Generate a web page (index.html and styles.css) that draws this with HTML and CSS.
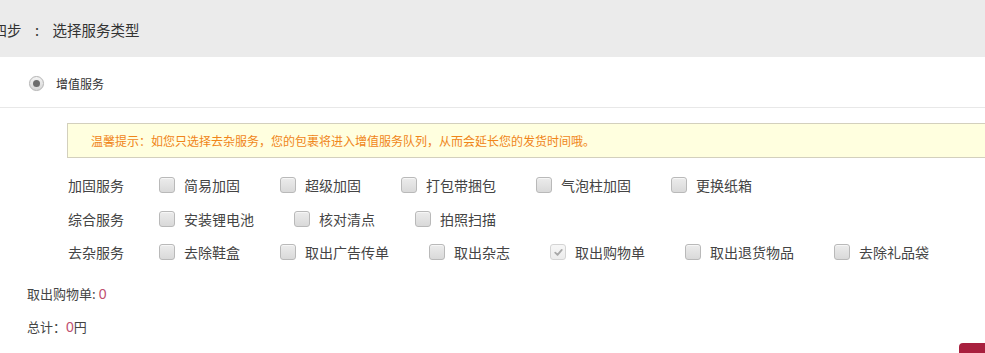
FILE: index.html
```html
<!DOCTYPE html>
<html lang="zh-CN">
<head>
<meta charset="utf-8">
<title>选择服务类型</title>
<link rel="stylesheet" href="styles.css">
</head>
<body>
<div class="page">
  <div class="step-head">
    <span class="step-title">第四步<span class="colon">:</span>选择服务类型</span>
  </div>
  <div class="type-row">
    <span class="radio"></span>
    <span class="type-label">增值服务</span>
  </div>
  <div class="services">
    <div class="notice">温馨提示：如您只选择去杂服务，您的包裹将进入增值服务队列，从而会延长您的发货时间哦。</div>
    <div class="svc-row">
      <span class="svc-cat">加固服务</span>
      <label class="opt"><span class="cb"></span><span>简易加固</span></label>
      <label class="opt"><span class="cb"></span><span>超级加固</span></label>
      <label class="opt"><span class="cb"></span><span>打包带捆包</span></label>
      <label class="opt"><span class="cb"></span><span>气泡柱加固</span></label>
      <label class="opt"><span class="cb"></span><span>更换纸箱</span></label>
    </div>
    <div class="svc-row">
      <span class="svc-cat">综合服务</span>
      <label class="opt"><span class="cb"></span><span>安装锂电池</span></label>
      <label class="opt"><span class="cb"></span><span>核对清点</span></label>
      <label class="opt"><span class="cb"></span><span>拍照扫描</span></label>
    </div>
    <div class="svc-row">
      <span class="svc-cat">去杂服务</span>
      <label class="opt"><span class="cb"></span><span>去除鞋盒</span></label>
      <label class="opt"><span class="cb"></span><span>取出广告传单</span></label>
      <label class="opt"><span class="cb"></span><span>取出杂志</span></label>
      <label class="opt"><span class="cb checked"><svg viewBox="0 0 16 16" width="16" height="16"><path d="M4 8.2 L6.8 11 L12 4.8" fill="none" stroke="#a9a9a9" stroke-width="2.2" stroke-linecap="round" stroke-linejoin="round"/></svg></span><span>取出购物单</span></label>
      <label class="opt"><span class="cb"></span><span>取出退货物品</span></label>
      <label class="opt"><span class="cb"></span><span>去除礼品袋</span></label>
    </div>
  </div>
  <div class="summary">
    <div class="sum-line">取出购物单: <span class="num">0</span></div>
    <div class="sum-line">总计：<span class="num">0</span>円</div>
  </div>
  <div class="footer">
    <span class="btn"></span>
  </div>
</div>
</body>
</html>
```
FILE: styles.css
```css
html, body {
  margin: 0;
  padding: 0;
  background: #fff;
  overflow: hidden;
}
body {
  font-family: "Noto Sans CJK SC", "Noto Sans", sans-serif;
  color: #333;
}
.page {
  width: 985px;
  height: 353px;
  overflow: hidden;
}
.step-head {
  height: 57px;
  background: #ebebeb;
  display: flex;
  align-items: center;
}
.step-title {
  font-size: 14.5px;
  color: #333;
  margin-left: -22px;
  white-space: nowrap;
  padding-top: 2px;
}
.colon {
  display: inline-block;
  width: 31px;
  text-align: center;
}
.type-row {
  height: 48px;
  border-bottom: 1px solid #e8e8e8;
  display: flex;
  align-items: center;
  padding-left: 29px;
  padding-top: 2px;
}
.radio {
  width: 13px;
  height: 13px;
  border-radius: 50%;
  border: 1px solid #b4b4b4;
  background: linear-gradient(#f4f4f4, #d6d6d6);
  display: flex;
  align-items: center;
  justify-content: center;
  box-shadow: 0 0 1px rgba(0,0,0,0.1);
}
.radio::after {
  content: "";
  width: 7px;
  height: 7px;
  border-radius: 50%;
  background: #6c6c6c;
}
.type-label {
  font-size: 12px;
  margin-left: 12px;
  color: #333;
}
.services {
  padding-left: 67px;
  padding-top: 15px;
}
.notice {
  height: 33px;
  box-sizing: content-box;
  border: 1px solid #d3d0bd;
  border-right: 0;
  background: #ffffdf;
  color: #f08519;
  font-size: 12px;
  display: flex;
  align-items: center;
  padding-left: 23px;
  margin-bottom: 10px;
}
.svc-row {
  height: 33.7px;
  display: flex;
  align-items: center;
  font-size: 14px;
  white-space: nowrap;
}
.svc-cat {
  width: 92px;
  padding-left: 1px;
  box-sizing: border-box;
  color: #444;
}
.opt {
  display: flex;
  align-items: center;
  margin-right: 40px;
  color: #444;
}
.cb {
  width: 14px;
  height: 14px;
  border: 1px solid #b9b9b9;
  border-radius: 3px;
  background: linear-gradient(#ececec, #d9d9d9);
  margin-right: 9px;
  display: flex;
  align-items: center;
  justify-content: center;
  box-shadow: inset 0 1px 0 #f6f6f6;
}
.cb.checked {
  background: linear-gradient(#f7f7f7, #ececec);
  border-color: #d4d4d4;
}
.cb svg {
  width: 13px;
  height: 13px;
}
.summary {
  padding-left: 27px;
  padding-top: 8px;
  font-size: 13px;
  color: #444;
}
.sum-line {
  height: 33px;
  display: flex;
  align-items: center;
}
.num {
  color: #c0506f;
  margin-left: 3px;
  font-family: "Liberation Sans", "Noto Sans", sans-serif;
  font-size: 14px;
}
.sum-line:last-child .num {
  margin-left: 0;
}
.footer {
  display: flex;
  justify-content: flex-end;
}
.btn {
  width: 26px;
  height: 12px;
  background: #a8203e;
  border-top-left-radius: 4px;
}
```
